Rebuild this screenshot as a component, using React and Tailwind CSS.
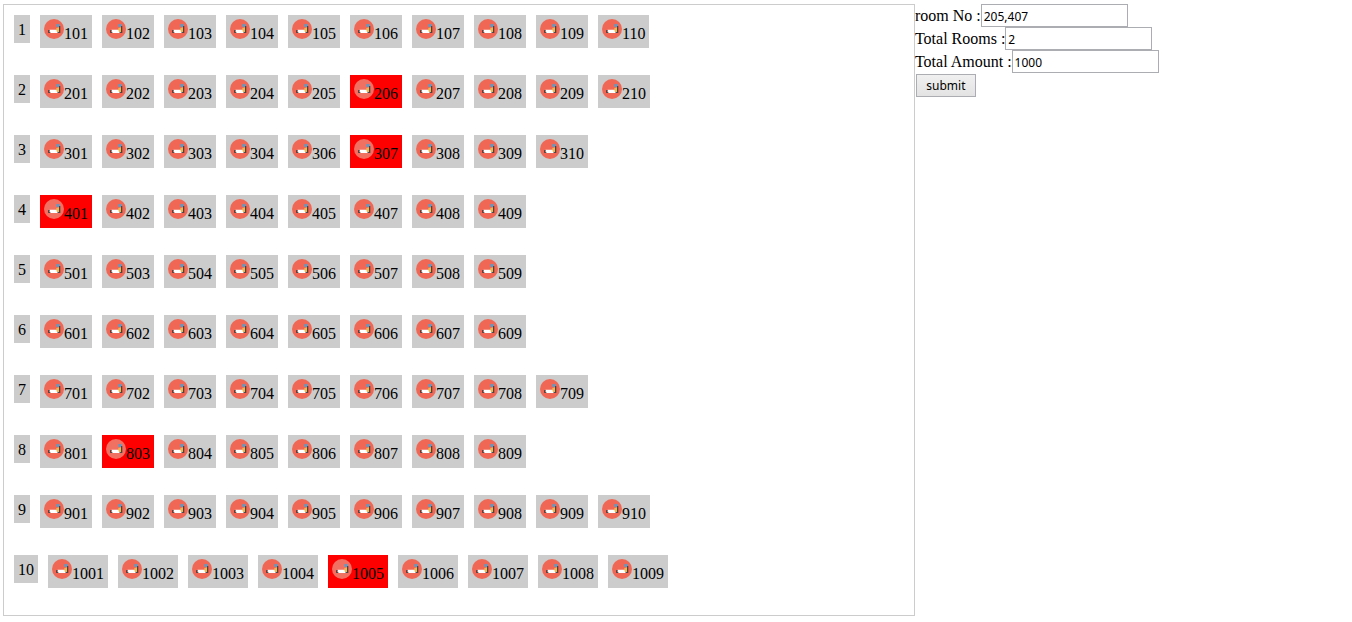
import { useState } from 'react';

const floors = [
  { floor: 1, rooms: [101, 102, 103, 104, 105, 106, 107, 108, 109, 110] },
  { floor: 2, rooms: [201, 202, 203, 204, 205, 206, 207, 208, 209, 210] },
  { floor: 3, rooms: [301, 302, 303, 304, 306, 307, 308, 309, 310] },
  { floor: 4, rooms: [401, 402, 403, 404, 405, 407, 408, 409] },
  { floor: 5, rooms: [501, 503, 504, 505, 506, 507, 508, 509] },
  { floor: 6, rooms: [601, 602, 603, 604, 605, 606, 607, 609] },
  { floor: 7, rooms: [701, 702, 703, 704, 705, 706, 707, 708, 709] },
  { floor: 8, rooms: [801, 803, 804, 805, 806, 807, 808, 809] },
  { floor: 9, rooms: [901, 902, 903, 904, 905, 906, 907, 908, 909, 910] },
  { floor: 10, rooms: [1001, 1002, 1003, 1004, 1005, 1006, 1007, 1008, 1009] },
];

const booked = new Set([206, 307, 401, 803, 1005]);

function BedIcon({ faded }) {
  return (
    <svg viewBox="0 0 20 20" className="size-5 shrink-0 self-start" aria-hidden="true">
      <circle cx="10" cy="10" r="10" fill={faded ? '#f07062' : '#f06855'} />
      <rect x="4" y="11" width="3" height="1" fill="#5a4a48" />
      <rect x="4" y="12" width="1" height="2" fill="#4a4444" />
      <rect x="4" y="13" width="12" height="1" fill="#5a4a48" />
      <path d="M5.500 10.800h8v3.200H6.500z" fill="#ffffff" />
      <path d="M12 9.500l3-1.300V13h-2z" fill="#f3b84b" />
      <rect x="12.500" y="5" width="3" height="3" rx="0.800" fill="#4fa0d0" />
      <rect x="15" y="7" width="1.300" height="7" fill="#4a4444" />
    </svg>
  );
}

function Room({ number }) {
  const isBooked = booked.has(number);
  return (
    <button
      type="button"
      disabled={isBooked}
      className={`flex h-[33px] items-end p-1 leading-5 text-black ${isBooked ? 'bg-[#ff0000]' : 'bg-[#cccccc]'}`}
    >
      <BedIcon faded={isBooked} />
      <span>{number}</span>
    </button>
  );
}

function Field({ id, label, value, onChange }) {
  return (
    <div className="flex items-center">
      <label htmlFor={id} className="leading-5 whitespace-nowrap">{label}</label>
      <input
        id={id}
        type="text"
        value={value}
        onChange={(e) => onChange(e.target.value)}
        className="h-[23px] w-[147px] min-w-0 border border-[#abadb3] bg-white px-0.5 pt-0.5 font-['Noto_Sans',sans-serif] text-xs text-black"
      />
    </div>
  );
}

export default function App() {
  const [roomNo, setRoomNo] = useState('205,407');
  const [total, setTotal] = useState('2');
  const [amount, setAmount] = useState('1000');

  return (
    <main className="flex items-start bg-white pt-1 pl-[3px] font-['Liberation_Serif',serif] text-base text-black">
      <section className="flex w-[67.6%] shrink-0 flex-col gap-[27px] border border-[#cccccc] px-2.5 pt-2.5 pb-[27px]">
        {floors.map(({ floor, rooms }) => (
          <div key={floor} className="flex flex-wrap items-start gap-2.5">
            <div className="bg-[#cccccc] px-1 pt-[5px] pb-[3px] leading-5">{floor}</div>
            {rooms.map((number) => (
              <Room key={number} number={number} />
            ))}
          </div>
        ))}
      </section>
      <form className="flex min-w-0 flex-1 flex-col items-start" onSubmit={(e) => e.preventDefault()}>
        <Field id="room-no" label="room No :" value={roomNo} onChange={setRoomNo} />
        <Field id="total-rooms" label="Total Rooms :" value={total} onChange={setTotal} />
        <Field id="total-amount" label="Total Amount :" value={amount} onChange={setAmount} />
        <button
          type="submit"
          className="m-px h-[23px] w-[60px] border border-[#abadb3] bg-linear-to-b from-[#f0f0f0] to-[#e3e3e3] font-['Noto_Sans',sans-serif] text-xs text-black"
        >
          submit
        </button>
      </form>
    </main>
  );
}
